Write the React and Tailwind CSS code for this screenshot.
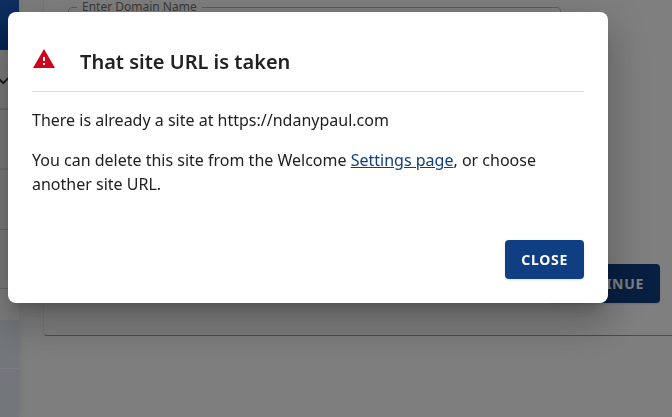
import React, { useState } from 'react';

function WarningIcon() {
  return (
    <svg viewBox="0 0 24 24" className="h-6 w-6 shrink-0" fill="#d0021b" aria-hidden="true">
      <path d="M1 21h22L12 2 1 21zm12-3h-2v-2h2v2zm0-4h-2v-4h2v4z" />
    </svg>
  );
}

function CheckIcon() {
  return (
    <svg viewBox="0 0 24 24" className="h-5 w-6 shrink-0" fill="none" stroke="#333333" strokeWidth="2.4" aria-hidden="true">
      <path d="M2 11.5 7.5 17 18 6.5" />
    </svg>
  );
}

function Sidebar() {
  return (
    <aside className="flex min-h-screen w-[19px] shrink-0 flex-col overflow-hidden bg-white shadow-[0_0_8px_rgba(0,0,0,0.1)]">
      <div className="h-[50px] bg-linear-to-b from-[#1a5fc4] to-[#0e47a0]" />
      <div className="flex h-[60px] items-center justify-end border-b-2 border-[#d4d4d4] bg-[#f4f4f4]">
        <CheckIcon />
      </div>
      <div className="h-[60px] border-b-2 border-[#e0e0e0] bg-[#f4f4f4]" />
      <div className="h-[60px] border-b border-[#cccccc] bg-[#f4f4f4]" />
      <div className="h-[59px] border-b border-[#cccccc] bg-[#f4f4f4]" />
      <div className="h-[31px] bg-[#fafafa]" />
      <div className="h-[49px] border-b border-[#fafafa] bg-[#e7edf5]" />
      <div className="flex-1 bg-[#e7edf5]" />
    </aside>
  );
}

function DomainForm() {
  return (
    <main className="min-w-0 flex-1 pl-6">
      <div className="flex h-[336px] flex-col justify-between rounded-bl border-b border-l border-b-[#999999] border-l-[#eeeeee] bg-white pr-3 pb-8 pl-6">
        <fieldset className="w-full max-w-[493px] rounded border border-[#b8b8b8] px-2">
          <legend className="px-[5px] text-xs leading-[14px] text-[#757575]">
            <label htmlFor="domain">Enter Domain Name</label>
          </legend>
          <input id="domain" type="text" className="h-10 w-full px-2 text-base outline-none" />
        </fieldset>
        <button
          type="button"
          className="self-end rounded bg-[#0f3e82] px-4 py-2 text-sm leading-[23px] font-bold tracking-wider text-white uppercase shadow"
        >
          Continue
        </button>
      </div>
    </main>
  );
}

function TakenDialog({ onClose }) {
  return (
    <div className="fixed inset-0 flex items-start bg-black/50 px-2 py-3">
      <div
        role="dialog"
        aria-modal="true"
        aria-labelledby="dialog-title"
        className="w-full max-w-[600px] rounded-lg bg-white p-6 shadow-[0_11px_15px_-7px_rgba(0,0,0,0.2),0_24px_38px_3px_rgba(0,0,0,0.14),0_9px_46px_8px_rgba(0,0,0,0.12)]"
      >
        <div className="flex items-start gap-6 border-b border-[#dddddd] pt-[11px] pb-[14px]">
          <WarningIcon />
          <h2 id="dialog-title" className="text-xl leading-[30px] font-semibold">
            That site URL is taken
          </h2>
        </div>
        <div className="mt-4 flex flex-col gap-4 text-base">
          <p>There is already a site at https://ndanypaul.com</p>
          <p>
            You can delete this site from the Welcome{' '}
            <a href="#settings" className="text-[#0f3e82] underline">
              Settings page
            </a>
            , or choose another site URL.
          </p>
        </div>
        <div className="mt-11 flex justify-end">
          <button
            type="button"
            onClick={onClose}
            className="rounded bg-[#0f3e82] px-4 py-2 text-sm leading-[23px] font-bold tracking-wider text-white uppercase shadow"
          >
            Close
          </button>
        </div>
      </div>
    </div>
  );
}

function App() {
  const [open, setOpen] = useState(true);

  return (
    <div className="flex h-screen overflow-hidden bg-[#fcfcfc] font-['Noto_Sans','Open_Sans',sans-serif] text-[#212121]">
      <Sidebar />
      <DomainForm />
      {open && <TakenDialog onClose={() => setOpen(false)} />}
    </div>
  );
}

export default App;
